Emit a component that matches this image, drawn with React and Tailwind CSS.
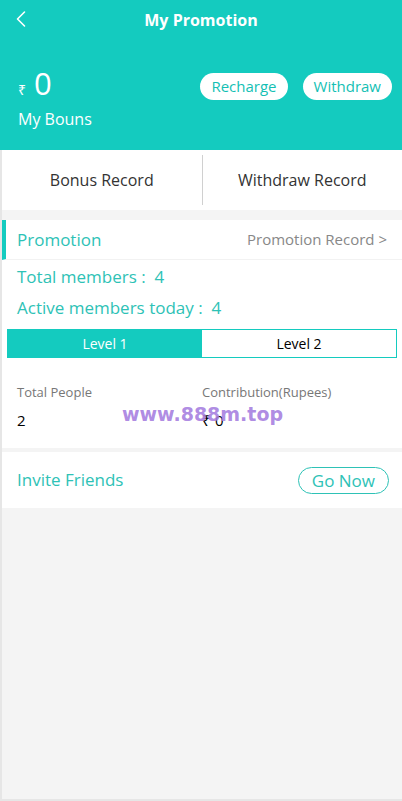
import { ChevronLeft } from 'lucide-react'

export default function App() {
  return (
    <div className="w-[402px] h-[801px] flex flex-col bg-[#f4f4f4] font-['Open_Sans',sans-serif] relative overflow-hidden">
      {/* header */}
      <div className="h-[150px] bg-[#14cbbf] text-white px-[18px] shrink-0">
        <div className="h-[40px] flex items-center relative">
          <ChevronLeft size={28} strokeWidth={1.4} className="absolute left-[-11px] top-[5px]" />
          <div className="w-full text-center text-[16px] font-bold">My Promotion</div>
        </div>
        <div className="flex justify-between mt-[25px]">
          <div>
            <div className="flex items-baseline">
              <span className="text-[14px] mr-[8px]">₹</span>
              <span className="text-[31px] leading-[36px]">0</span>
            </div>
            <div className="text-[16px] mt-[6px]">My Bouns</div>
          </div>
          <div className="flex gap-[15px] mt-[8px] mr-[-8px]">
            <button className="h-[27px] px-[11px] rounded-full bg-white text-[#14bfb4] text-[15px]">Recharge</button>
            <button className="h-[27px] px-[11px] rounded-full bg-white text-[#14bfb4] text-[15px]">Withdraw</button>
          </div>
        </div>
      </div>

      <div className="flex-1 flex flex-col border-l-2 border-b-2 border-[#e6e6e6]">
        {/* records */}
        <div className="h-[60px] bg-white flex items-center text-[#333] text-[16px]">
          <div className="flex-1 text-center">Bonus Record</div>
          <div className="w-px h-[50px] bg-[#d0d0d0]" />
          <div className="flex-1 text-center">Withdraw Record</div>
        </div>

        {/* promotion */}
        <div className="mt-[10px] bg-white">
          <div className="h-[40px] flex items-center justify-between border-b border-[#f2f2f2] border-l-4 border-l-[#14cbbf] pl-[11px] pr-[15px]">
            <span className="text-[#2ec2b6] text-[17px]">Promotion</span>
            <span className="text-[#888] text-[15px]">Promotion Record &gt;</span>
          </div>
          <div className="px-[15px] pt-[1px] text-[#2ec2b6] text-[17px]">
            <div className="h-[31px] leading-[31px]">Total members :&nbsp; 4</div>
            <div className="h-[31px] leading-[31px]">Active members today :&nbsp; 4</div>
          </div>
          <div className="mx-[5px] mt-[6px] h-[29px] flex border border-[#14cbbf] text-[14px]">
            <div className="flex-1 bg-[#14cbbf] text-white flex items-center justify-center">Level 1</div>
            <div className="flex-1 bg-white text-black flex items-center justify-center">Level 2</div>
          </div>
          <div className="grid grid-cols-2 px-[15px] pt-[25px] pb-[17px]">
            <div>
              <div className="text-[13px] text-[#777]">Total People</div>
              <div className="text-[15px] text-black mt-[6px]">2</div>
            </div>
            <div>
              <div className="text-[13px] text-[#777]">Contribution(Rupees)</div>
              <div className="text-[15px] text-black mt-[6px]">₹ 0</div>
            </div>
          </div>
        </div>

        {/* invite */}
        <div className="mt-[4px] h-[56px] bg-white flex items-center justify-between pl-[15px] pr-[13px]">
          <span className="text-[#2ec2b6] text-[17px]">Invite Friends</span>
          <button className="h-[27px] px-[13px] rounded-full border border-[#2ec2b6] text-[#2ec2b6] text-[17px]">Go Now</button>
        </div>
      </div>

      <div className="absolute left-[122px] top-[400px] text-[19px] font-bold text-[#a57de0]/90 font-['DejaVu_Sans',sans-serif] pointer-events-none">
        www.888m.top
      </div>
    </div>
  )
}
